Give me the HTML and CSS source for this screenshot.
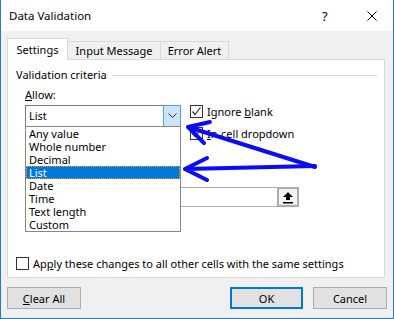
FILE: index.html
```html
<!DOCTYPE html>
<html>
<head>
<meta charset="utf-8">
<link rel="stylesheet" href="styles.css">
</head>
<body>
<div class="window">
  <div class="titlebar">
    <span class="title">Data Validation</span>
    <span class="help">?</span>
    <svg class="close" width="10" height="10" viewBox="0 0 10 10"><path d="M0.5 0.5 L9.5 9.5 M9.5 0.5 L0.5 9.5" stroke="#000" stroke-width="1" fill="none"/></svg>
  </div>
  <div class="tabs">
    <div class="tab active">Settings</div>
    <div class="tab t2">Input Message</div>
    <div class="tab t3">Error Alert</div>
  </div>
  <div class="panel">
    <div class="group-head"><span>Validation criteria</span><span class="rule"></span></div>
    <div class="label-allow"><u>A</u>llow:</div>
    <div class="combo-row">
      <div class="combo-wrap">
        <div class="combo">
          <span class="combo-val">List</span>
          <span class="combo-btn"><svg width="9" height="6" viewBox="0 0 9 6"><path d="M0.5 0.5 L4.5 4.5 L8.5 0.5" stroke="#333" stroke-width="1" fill="none"/></svg></span>
        </div>
        <div class="list">
          <div class="item">Any value</div>
          <div class="item">Whole number</div>
          <div class="item">Decimal</div>
          <div class="item sel">List</div>
          <div class="item">Date</div>
          <div class="item">Time</div>
          <div class="item">Text length</div>
          <div class="item">Custom</div>
        </div>
      </div>
      <div class="checks">
        <label class="check"><span class="box"><svg width="11" height="11" viewBox="0 0 11 11"><path d="M1.5 5.5 L4 8.5 L9.5 1.5" stroke="#333" stroke-width="1.2" fill="none"/></svg></span><span>Ignore <u>b</u>lank</span></label>
        <label class="check"><span class="box"><svg width="11" height="11" viewBox="0 0 11 11"><path d="M1.5 5.5 L4 8.5 L9.5 1.5" stroke="#333" stroke-width="1.2" fill="none"/></svg></span><span><u>I</u>n-cell dropdown</span></label>
      </div>
    </div>
    <div class="source">
      <span class="source-field"></span>
      <span class="source-btn"><svg width="12" height="13" viewBox="0 0 12 13"><path d="M6 1 L11 6 L8 6 L8 9 L4 9 L4 6 L1 6 Z" fill="#000"/><rect x="1" y="11" width="10" height="1.5" fill="#000"/></svg></span>
    </div>
    <label class="check apply"><span class="box"></span><span>Ap<u>p</u>ly these changes to all other cells with the same settings</span></label>
  </div>
  <div class="footer">
    <button class="btn"><u>C</u>lear All</button>
    <span class="spacer"></span>
    <button class="btn ok">OK</button>
    <button class="btn">Cancel</button>
  </div>
  <svg class="arrows" width="394" height="319" viewBox="0 0 394 319">
    <g stroke="#0b0bf5" stroke-width="4" stroke-linecap="round" fill="none">
      <path d="M315 167 L188 127 M188 127 L210 122 M188 127 L204 143"/>
      <path d="M315 166 L185 169 M185 169 L207 158 M185 169 L207 180"/>
    </g>
  </svg>
</div>
</body>
</html>
```

FILE: styles.css
```css
* { box-sizing: border-box; }
html, body { margin: 0; padding: 0; background: #fff; }
body { font-family: "Noto Sans", "Open Sans", sans-serif; font-size: 11px; color: #000; }
.window {
  position: relative;
  width: 394px;
  height: 319px;
  background: #f0f0f0;
  border: 1px solid #2b79c4;
  border-top: none;
  overflow: hidden;
}
.titlebar {
  height: 31px;
  background: #fff;
  display: flex;
  align-items: center;
  padding-left: 8px;
}
.title { flex: 1; font-size: 11.5px; }
.help { width: 12px; margin-right: 33px; font-size: 13px; }
.close { margin-right: 16px; }
.tabs {
  display: flex;
  align-items: flex-end;
  margin-top: 7px;
  padding-left: 6px;
  height: 21px;
  position: relative;
  z-index: 2;
}
.tab {
  height: 18px;
  border: 1px solid #d9d9d9;
  border-bottom: none;
  background: #f0f0f0;
  line-height: 17px;
  text-align: center;
}
.tab.active {
  height: 22px;
  width: 61px;
  margin-bottom: -1px;
  background: #fff;
  line-height: 21px;
}
.t2 { width: 93px; border-left: none; }
.t3 { width: 68px; border-left: none; }
.panel {
  position: relative;
  margin-left: 6px;
  width: 378px;
  height: 219px;
  background: #fff;
  border: 1px solid #d9d9d9;
}
.group-head {
  display: flex;
  align-items: center;
  margin-top: 8px;
  padding-left: 8px;
  height: 14px;
  line-height: 14px;
}
.rule { flex: 1; height: 1px; background: #dcdcdc; margin-left: 5px; margin-right: 6px; }
.label-allow { margin-top: 6px; padding-left: 17px; height: 14px; line-height: 14px; }
.combo-row { display: flex; margin-top: 3px; padding-left: 17px; }
.combo-wrap { position: relative; width: 156px; height: 22px; z-index: 3; }
.combo {
  display: flex;
  height: 22px;
  border: 1px solid #7a7a7a;
  background: #fff;
}
.combo-val { flex: 1; padding-left: 3px; line-height: 20px; }
.combo-btn {
  width: 18px;
  margin: -1px -1px -1px 0;
  background: #cce4f7;
  border: 1px solid #569de5;
  display: flex;
  align-items: center;
  justify-content: center;
}
.list {
  position: absolute;
  top: 21px;
  left: 0;
  width: 156px;
  border: 1px solid #828790;
  background: #fff;
}
.item { height: 13px; line-height: 13px; padding-left: 3px; }
.item.sel {
  background: #0078d7;
  color: #fff;
  outline: 1px dotted #f39c3b;
  outline-offset: -1px;
}
.checks { display: flex; flex-direction: column; gap: 9px; margin-left: 9px; }
.check { display: flex; align-items: center; height: 13px; line-height: 13px; }
.box {
  width: 13px;
  height: 13px;
  border: 1px solid #333;
  background: #fff;
  margin-right: 4px;
  display: flex;
  align-items: center;
  justify-content: center;
  flex: none;
}
.source { display: flex; margin-top: 47px; margin-left: 17px; width: 274px; height: 20px; }
.source-field { flex: 1; border: 1px solid #adadad; border-right: none; }
.source-btn {
  width: 22px;
  border: 2px solid #adadad;
  background: #f3f3f3;
  display: flex;
  align-items: center;
  justify-content: center;
}
.apply { margin-top: 50px; margin-left: 8px; }
.footer { display: flex; margin-top: 9px; padding: 0 6px; gap: 10px; }
.spacer { flex: 1; }
.btn {
  width: 74px;
  height: 22px;
  background: #e1e1e1;
  border: 1px solid #adadad;
  font-family: inherit;
  font-size: 11px;
  color: #000;
  padding: 0;
}
.btn.ok { width: 73px; border: 2px solid #0078d7; }
.arrows { position: absolute; left: -1px; top: 0; pointer-events: none; z-index: 5; }
```
